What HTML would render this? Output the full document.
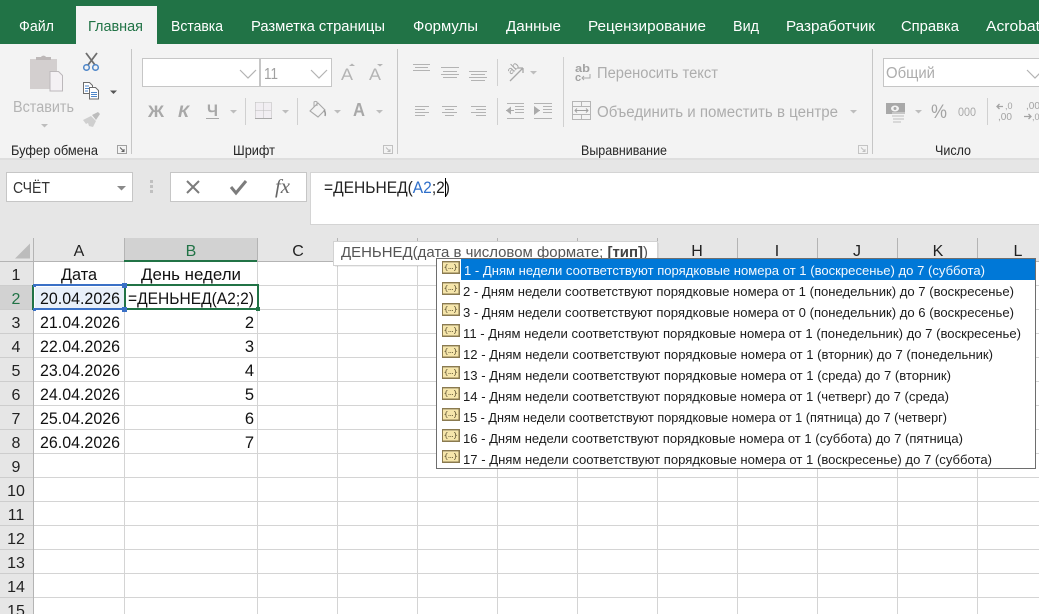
<!DOCTYPE html>
<html lang="ru"><head><meta charset="utf-8"><title>Excel</title>
<style>
html,body{margin:0;padding:0;background:#fff;width:1039px;height:614px;overflow:hidden}
svg{display:block}
text{font-family:"Liberation Sans",sans-serif}
.tab{font-size:15px;fill:#fff}
.dis{font-size:15.500px;fill:#adadad}
.lbl{font-size:14px;fill:#262626}
.hd{font-size:16px;fill:#222;text-anchor:middle}
.rn{font-size:16px;fill:#222;text-anchor:middle}
.c{font-size:16.500px;fill:#111}
.li{font-size:13px;fill:#1c1c1c}
.ic{fill:none;stroke:#b3b3b3;stroke-width:1}
.dd{fill:#b5b5b5}
</style></head><body>
<svg xmlns="http://www.w3.org/2000/svg" width="1039" height="614" viewBox="0 0 1039 614">
<defs>
<g id="li">
<rect x="0" y="0" width="18" height="13" fill="#8a7a50"/>
<rect x="1" y="1" width="15.500" height="10.500" fill="#f6e6ab"/>
<rect x="1" y="1" width="15.500" height="1" fill="#c9bb8c"/>
<path d="M5.500 3.500 Q4 3.500 4 5 V5.800 L3 6.300 L4 6.800 V7.500 Q4 9.500 5.500 9.500 M12 3.500 Q13.500 3.500 13.500 5 V5.800 L14.500 6.300 L13.500 6.800 V7.500 Q13.500 9.500 12 9.500" fill="none" stroke="#6b5f3c" stroke-width=".8"/>
<path d="M6.500 7.500h.9M8.300 7.500h.9M10 7.500h.9" stroke="#6b5f3c" stroke-width="1"/>
</g>
<path id="dn" d="M0 0h7l-3.500 3.500z" fill="#bdbdbd"/>
</defs>

<!-- title/tab band -->
<rect width="1039" height="44" fill="#217346"/>
<rect x="76" y="6" width="81" height="38" fill="#f3f3f3"/>
<text class="tab" x="19" y="31" textLength="35" lengthAdjust="spacingAndGlyphs">Файл</text>
<text class="tab" x="88" y="31" textLength="55" lengthAdjust="spacingAndGlyphs" style="fill:#217346">Главная</text>
<text class="tab" x="171" y="31" textLength="52" lengthAdjust="spacingAndGlyphs">Вставка</text>
<text class="tab" x="251" y="31" textLength="134" lengthAdjust="spacingAndGlyphs">Разметка страницы</text>
<text class="tab" x="413" y="31" textLength="65" lengthAdjust="spacingAndGlyphs">Формулы</text>
<text class="tab" x="506" y="31" textLength="55" lengthAdjust="spacingAndGlyphs">Данные</text>
<text class="tab" x="588" y="31" textLength="118" lengthAdjust="spacingAndGlyphs">Рецензирование</text>
<text class="tab" x="733" y="31" textLength="26" lengthAdjust="spacingAndGlyphs">Вид</text>
<text class="tab" x="786" y="31" textLength="89" lengthAdjust="spacingAndGlyphs">Разработчик</text>
<text class="tab" x="901" y="31" textLength="58" lengthAdjust="spacingAndGlyphs">Справка</text>
<text class="tab" x="986" y="31" textLength="54" lengthAdjust="spacingAndGlyphs">Acrobat</text>

<!-- ribbon -->
<rect y="44" width="1039" height="115" fill="#f3f3f3"/>
<rect y="159" width="1039" height="79" fill="#e6e6e6"/>
<rect y="158" width="1039" height="2" fill="#dedede"/>
<g fill="#c6c6c6">
<rect x="131" y="49" width="1" height="105"/><rect x="397" y="49" width="1" height="105"/>
<rect x="872" y="49" width="1" height="105"/>
</g>
<g fill="#d0d0d0">
<rect x="245" y="98" width="1" height="27"/><rect x="297" y="98" width="1" height="27"/>
<rect x="497" y="59" width="1" height="27"/><rect x="497" y="98" width="1" height="27"/>
<rect x="563" y="57" width="1" height="70"/><rect x="987" y="98" width="1" height="27"/>
</g>

<!-- clipboard group -->
<rect x="30" y="59" width="27" height="30" fill="#d3cfcf"/>
<path d="M36 60v-3h5a3 3 0 0 1 5 0h5v3z" fill="#bdb8b8"/>
<path d="M50 71.500h8.500l4 4v15.500h-12.500z" fill="#f4f1f4" stroke="#bcb8bb"/>
<text x="13" y="112" class="dis" textLength="61" lengthAdjust="spacingAndGlyphs" style="fill:#b4b4b4">Вставить</text>
<use href="#dn" x="41" y="124"/>
<path d="M86 53l9 12M97 53l-9 12" stroke="#6e6e6e" stroke-width="1.800" fill="none"/>
<circle cx="86.500" cy="67.500" r="2.800" fill="none" stroke="#4e86c8" stroke-width="1.500"/>
<circle cx="95.500" cy="67.500" r="2.800" fill="none" stroke="#4e86c8" stroke-width="1.500"/>
<path d="M83.500 82.500h6l3 3v8h-9z" fill="#fff" stroke="#6d6d6d"/>
<path d="M89.500 87.500h6l3 3v8.500h-9z" fill="#fff" stroke="#6d6d6d"/>
<path d="M85 86h4M85 88.500h4M85 91h3" stroke="#4e86c8"/>
<path d="M91 92.500h6M91 94.500h6M91 96.500h6" stroke="#4e86c8"/>
<path d="M110 90.500h7l-3.500 3.500z" fill="#555"/>
<path d="M83 120l8-4 5 5-3 6-4-1-1-3-2 1z" fill="#cfcfcf"/>
<path d="M92 115l6-3 2 2-4 6z" fill="#bdbdbd"/>
<text x="11" y="155" class="lbl" textLength="87" lengthAdjust="spacingAndGlyphs">Буфер обмена</text>
<path d="M117.500 145.500h9v8h-9z" fill="none" stroke="#a0a0a0"/>
<path d="M120 147.500l4 4M124 149v2.500h-2.500" fill="none" stroke="#606060"/>

<!-- font group -->
<rect x="142.500" y="58.500" width="117" height="28" fill="#fff" stroke="#c6c6c6"/>
<rect x="260.500" y="58.500" width="71" height="28" fill="#fff" stroke="#c6c6c6"/>
<path d="M240 70l8 8 8-8M311 70l8 8 8-8" fill="none" stroke="#b3b3b3" stroke-width="1.200"/>
<text x="264" y="79" style="font-size:15.500px;fill:#a0a0a0" textLength="14" lengthAdjust="spacingAndGlyphs">11</text>
<text x="341" y="80" style="font-size:17px;fill:#b4b4b4" textLength="12" lengthAdjust="spacingAndGlyphs">A</text>
<path d="M349 66h6l-3-2.500z" fill="#b4b4b4"/>
<text x="369" y="80" style="font-size:17px;fill:#b4b4b4" textLength="12" lengthAdjust="spacingAndGlyphs">A</text>
<path d="M377 64h6l-3 2.500z" fill="#b4b4b4"/>
<text x="148" y="117" style="font-size:17px;font-weight:bold;fill:#a8a8a8" textLength="16" lengthAdjust="spacingAndGlyphs">Ж</text>
<text x="178" y="117" style="font-size:17px;font-weight:bold;font-style:italic;fill:#a8a8a8" textLength="11" lengthAdjust="spacingAndGlyphs">К</text>
<text x="207" y="116" style="font-size:17px;font-weight:bold;fill:#a8a8a8" textLength="11" lengthAdjust="spacingAndGlyphs">Ч</text>
<rect x="206" y="118" width="13" height="1" fill="#a8a8a8"/>
<use href="#dn" x="230" y="110"/><use href="#dn" x="282" y="110"/><use href="#dn" x="334" y="110"/><use href="#dn" x="376" y="110"/>
<rect x="255" y="103" width="17" height="15" fill="#f0ebf2" opacity=".6"/>
<path d="M255.500 102.500h16M255.500 110.500h16M255.500 102.500v15M263.500 102.500v15M271.500 102.500v15" stroke="#bbb" stroke-dasharray="1 1" fill="none"/>
<rect x="255" y="118" width="17" height="1" fill="#a8a8a8"/>
<path d="M310 111l8-8 7 7-7 7z" fill="none" stroke="#a8a8a8" stroke-width="1.100"/>
<path d="M314 107v-5a2 2 0 0 1 3 0v4" fill="none" stroke="#a8a8a8"/>
<path d="M324 110q2 3 1 6" fill="none" stroke="#999" stroke-width="1.500"/>
<text x="353" y="116" style="font-size:18px;font-weight:bold;fill:#a8a8a8" textLength="12" lengthAdjust="spacingAndGlyphs">A</text>
<text x="233" y="155" class="lbl" textLength="42" lengthAdjust="spacingAndGlyphs">Шрифт</text>
<path d="M383.500 145.500h9v8h-9z" fill="none" stroke="#c0c0c0"/>
<path d="M386 147.500l4 4M390 149v2.500h-2.500" fill="none" stroke="#bbb"/>

<!-- alignment group -->
<g class="ic">
<path d="M413 64.500h17M415 67.500h13M413 70.500h17"/>
<path d="M441 67.500h18M443 71.500h14M441 74.500h18M443 77.500h14"/>
<path d="M469 71.500h18M471 74.500h14M469 77.500h18M471 80.500h14"/>
<path d="M415 106.500h14M415 109.500h10M415 112.500h14M415 115.500h10"/>
<path d="M442 106.500h15M445 109.500h9M442 112.500h15M445 115.500h9"/>
<path d="M471 106.500h15M476 109.500h10M471 112.500h15M476 115.500h10"/>
<path d="M515 106.500h9M515 109.500h9M515 112.500h9M507 103.500h17M507 118.500h17"/>
<path d="M534 103.500h18M543 106.500h9M543 109.500h9M543 112.500h9M534 118.500h18"/>
</g>
<path d="M506 110.500l5-4v8z M534 106l6 4.500-6 4.500z" fill="#aaa"/>
<path d="M506 110.500h8M534 110.500h6" stroke="#aaa"/>
<text transform="translate(511,75) rotate(-45)" style="font-size:11px;fill:#a3a3a3">ab</text>
<path d="M510 81l13-13M523 68v5M523 68h-5" fill="none" stroke="#a8a8a8" stroke-width="1.300"/>
<use href="#dn" x="530" y="71"/>
<text x="575" y="72" style="font-size:11px;font-weight:bold;fill:#a3a3a3" textLength="15" lengthAdjust="spacingAndGlyphs">ab</text>
<text x="575" y="81" style="font-size:11px;font-weight:bold;fill:#a3a3a3">c</text>
<path d="M590 74v4h-8M584 76l-2 2 2 2" fill="none" stroke="#a8a8a8"/>
<text x="597" y="78" class="dis" textLength="121" lengthAdjust="spacingAndGlyphs">Переносить текст</text>
<rect x="572.500" y="101.500" width="18" height="18" fill="none" stroke="#b5b5b5"/>
<path d="M572.500 106.500h18M572.500 114.500h18M581.500 101.500v5M581.500 114.500v5" stroke="#b5b5b5"/>
<path d="M575 110.500h13M577 108.500l-2 2 2 2M586 108.500l2 2-2 2" fill="none" stroke="#a0a0a0"/>
<text x="597" y="117" class="dis" textLength="241" lengthAdjust="spacingAndGlyphs">Объединить и поместить в центре</text>
<use href="#dn" x="850" y="110"/>
<text x="581" y="155" class="lbl" textLength="86" lengthAdjust="spacingAndGlyphs">Выравнивание</text>
<path d="M858.500 145.500h9v8h-9z" fill="none" stroke="#c4c4c4"/>
<path d="M861 147.500l4 4M865 149v2.500h-2.500" fill="none" stroke="#c0c0c0"/>

<!-- number group -->
<rect x="883.500" y="58.500" width="160" height="28" fill="#fff" stroke="#c6c6c6"/>
<text x="886" y="78" class="dis" textLength="49" lengthAdjust="spacingAndGlyphs">Общий</text>
<path d="M1027 70l8 8 8-8" fill="none" stroke="#b3b3b3" stroke-width="1.200"/>
<rect x="886" y="103" width="19" height="11" fill="#a8a8a8"/>
<ellipse cx="895" cy="108.500" rx="4" ry="3" fill="#f3f3f3"/>
<circle cx="895" cy="108.500" r="1.500" fill="#a8a8a8"/>
<path d="M892 113h13M892 116h12M893 119h11M893 122h8" stroke="#d0d0d0" stroke-width="1.500"/>
<use href="#dn" x="915" y="110"/>
<text x="931" y="118" style="font-size:19px;fill:#a3a3a3" textLength="16" lengthAdjust="spacingAndGlyphs">%</text>
<text x="958" y="116" style="font-size:11.500px;fill:#a9a9a9" textLength="18" lengthAdjust="spacingAndGlyphs">000</text>
<text x="1005" y="109" style="font-size:9px;fill:#a3a3a3">,0</text>
<text x="998" y="120" style="font-size:10px;fill:#a3a3a3" textLength="14" lengthAdjust="spacingAndGlyphs">,00</text>
<path d="M1003 106.500h-6M999.500 104l-2.500 2.500 2.500 2.500" fill="none" stroke="#a3a3a3" stroke-width="1.300"/>
<text x="1026" y="109" style="font-size:10px;fill:#a3a3a3" textLength="14" lengthAdjust="spacingAndGlyphs">,00</text>
<text x="1032" y="120" style="font-size:9px;fill:#a3a3a3">,0</text>
<path d="M1024 116.500h7M1028.500 114l2.500 2.500-2.500 2.500" fill="none" stroke="#a3a3a3" stroke-width="1.300"/>
<text x="935" y="155" class="lbl" textLength="36" lengthAdjust="spacingAndGlyphs">Число</text>

<!-- formula bar -->
<rect x="6.500" y="172.500" width="126" height="29" fill="#fff" stroke="#c6c6c6"/>
<text x="13" y="193" style="font-size:15.500px;fill:#333" textLength="37" lengthAdjust="spacingAndGlyphs">СЧЁТ</text>
<path d="M117 186h9l-4.500 4.500z" fill="#8a8a8a"/>
<g fill="#c0c0c0"><rect x="150" y="180" width="3" height="3"/><rect x="150" y="185" width="3" height="3"/><rect x="150" y="190" width="3" height="3"/></g>
<rect x="170.500" y="172.500" width="136" height="29" fill="#fff" stroke="#c6c6c6"/>
<path d="M187 181l12 12M199 181l-12 12" stroke="#7c7c7c" stroke-width="2" fill="none"/>
<path d="M231 187l5 6 10-12" stroke="#7c7c7c" stroke-width="3" fill="none"/>
<text x="275" y="193" style="font-family:'Liberation Serif',serif;font-size:20px;font-style:italic;fill:#666" textLength="15" lengthAdjust="spacingAndGlyphs">fx</text>
<rect x="310.500" y="172.500" width="735" height="52" fill="#fff" stroke="#d4d4d4"/>
<text x="324" y="193" style="font-size:16.500px;fill:#222" textLength="126" lengthAdjust="spacingAndGlyphs"><tspan>=ДЕНЬНЕД(</tspan><tspan fill="#2f6fc9">А2</tspan><tspan>;2)</tspan></text>
<rect x="445" y="178" width="1" height="19" fill="#000"/>

<!-- grid -->
<rect y="238" width="1039" height="376" fill="#fff"/>
<rect y="238" width="1039" height="24" fill="#e6e6e6"/>
<rect x="0" y="262" width="33" height="352" fill="#e6e6e6"/>
<rect x="124" y="238" width="133" height="22" fill="#d2d2d2"/>
<rect x="0" y="286" width="33" height="23" fill="#d2d2d2"/>
<path d="M30 243.500v15h-15z" fill="#bcbcbc"/>
<g stroke="#d4d4d4">
<path d="M124.500 262V614M257.500 262V614M337.500 262V614M417.500 262V614M497.500 262V614M577.500 262V614M657.500 262V614M737.500 262V614M817.500 262V614M897.500 262V614M977.500 262V614"/>
<path d="M33 285.500H1039M33 309.500H1039M33 333.500H1039M33 357.500H1039M33 381.500H1039M33 405.500H1039M33 429.500H1039M33 453.500H1039M33 477.500H1039M33 501.500H1039M33 525.500H1039M33 549.500H1039M33 573.500H1039M33 597.500H1039"/>
</g>
<g stroke="#b4b4b4">
<path d="M33.500 238V614M124.500 238V261M257.500 238V261M337.500 238V261M417.500 238V261M497.500 238V261M577.500 238V261M657.500 238V261M737.500 238V261M817.500 238V261M897.500 238V261M977.500 238V261"/>
<path d="M0 261.500H1039"/>
</g>
<g stroke="#cdcdcd">
<path d="M0 285.500H33M0 309.500H33M0 333.500H33M0 357.500H33M0 381.500H33M0 405.500H33M0 429.500H33M0 453.500H33M0 477.500H33M0 501.500H33M0 525.500H33M0 549.500H33M0 573.500H33M0 597.500H33"/>
</g>
<rect x="124" y="260" width="133" height="2" fill="#217346"/>
<text class="hd" x="79" y="256">A</text>
<text class="hd" x="191" y="256" style="fill:#217346">B</text>
<text class="hd" x="298" y="256">C</text>
<text class="hd" x="697" y="256">H</text><text class="hd" x="777" y="256">I</text><text class="hd" x="857" y="256">J</text><text class="hd" x="938" y="256">K</text><text class="hd" x="1018" y="256">L</text>
<text class="rn" x="16" y="280">1</text>
<text class="rn" x="16" y="304" style="fill:#217346">2</text>
<text class="rn" x="16" y="328">3</text><text class="rn" x="16" y="352">4</text><text class="rn" x="16" y="376">5</text><text class="rn" x="16" y="400">6</text><text class="rn" x="16" y="424">7</text><text class="rn" x="16" y="448">8</text><text class="rn" x="16" y="472">9</text>
<text class="rn" x="16" y="496">10</text><text class="rn" x="16" y="520">11</text><text class="rn" x="16" y="544">12</text><text class="rn" x="16" y="568">13</text><text class="rn" x="16" y="592">14</text><text class="rn" x="16" y="616">15</text>

<rect x="35" y="287" width="89" height="21" fill="#e9f0fa"/>
<text class="c" x="61" y="280" textLength="36" lengthAdjust="spacingAndGlyphs">Дата</text>
<text class="c" x="141" y="280" textLength="100" lengthAdjust="spacingAndGlyphs">День недели</text>
<text class="c" x="40" y="304" textLength="80" lengthAdjust="spacingAndGlyphs">20.04.2026</text>
<text class="c" x="40" y="328" textLength="80" lengthAdjust="spacingAndGlyphs">21.04.2026</text>
<text class="c" x="40" y="352" textLength="80" lengthAdjust="spacingAndGlyphs">22.04.2026</text>
<text class="c" x="40" y="376" textLength="80" lengthAdjust="spacingAndGlyphs">23.04.2026</text>
<text class="c" x="40" y="400" textLength="80" lengthAdjust="spacingAndGlyphs">24.04.2026</text>
<text class="c" x="40" y="424" textLength="80" lengthAdjust="spacingAndGlyphs">25.04.2026</text>
<text class="c" x="40" y="448" textLength="80" lengthAdjust="spacingAndGlyphs">26.04.2026</text>
<text class="c" x="254" y="328" text-anchor="end">2</text><text class="c" x="254" y="352" text-anchor="end">3</text><text class="c" x="254" y="376" text-anchor="end">4</text><text class="c" x="254" y="400" text-anchor="end">5</text><text class="c" x="254" y="424" text-anchor="end">6</text><text class="c" x="254" y="448" text-anchor="end">7</text>

<!-- selection -->
<rect x="35" y="284" width="89" height="2" fill="#3a70c6"/>
<rect x="35" y="308" width="89" height="2" fill="#3a70c6"/>
<rect x="32" y="285" width="2" height="25" fill="#217346"/>
<rect x="33" y="284" width="3" height="3" fill="#3a70c6"/><rect x="33" y="308" width="3" height="3" fill="#3a70c6"/>
<rect x="127" y="284.500" width="131" height="25" fill="#fff"/>
<rect x="127" y="284" width="131" height="2" fill="#217346"/>
<rect x="127" y="308" width="131" height="2" fill="#217346"/>
<rect x="257" y="284" width="2" height="26" fill="#217346"/>
<rect x="124" y="286" width="2" height="22" fill="#217346"/>
<rect x="122" y="283" width="5" height="5" fill="#3a70c6"/>
<rect x="122" y="307" width="5" height="5" fill="#3a70c6"/>
<rect x="256" y="307" width="4" height="4" fill="#217346"/>
<text class="c" x="128" y="304" textLength="126" lengthAdjust="spacingAndGlyphs">=ДЕНЬНЕД(А2;2)</text>

<!-- tooltip -->
<rect x="335" y="243" width="324" height="24" fill="#000" opacity=".06"/>
<rect x="333.500" y="241.500" width="324" height="24" fill="#fff" stroke="#d2d2d2"/>
<text x="341" y="257" style="font-size:14.500px;fill:#555" textLength="307" lengthAdjust="spacingAndGlyphs">ДЕНЬНЕД(дата в числовом формате; <tspan font-weight="bold" fill="#444">[тип]</tspan>)</text>

<!-- list -->
<rect x="436.500" y="258.500" width="599" height="210" fill="#fff" stroke="#6e6e6e"/>
<rect x="461" y="259" width="574" height="21" fill="#0078d7"/>
<use href="#li" x="442" y="261"/><use href="#li" x="442" y="282"/><use href="#li" x="442" y="303"/><use href="#li" x="442" y="324"/><use href="#li" x="442" y="345"/><use href="#li" x="442" y="366"/><use href="#li" x="442" y="387"/><use href="#li" x="442" y="408"/><use href="#li" x="442" y="429"/><use href="#li" x="442" y="450"/>
<text class="li" x="464" y="275" textLength="521" lengthAdjust="spacingAndGlyphs" style="fill:#f4f9fe">1 - Дням недели соответствуют порядковые номера от 1 (воскресенье) до 7 (суббота)</text>
<text class="li" x="463" y="296" textLength="551" lengthAdjust="spacingAndGlyphs">2 - Дням недели соответствуют порядковые номера от 1 (понедельник) до 7 (воскресенье)</text>
<text class="li" x="463" y="317" textLength="551" lengthAdjust="spacingAndGlyphs">3 - Дням недели соответствуют порядковые номера от 0 (понедельник) до 6 (воскресенье)</text>
<text class="li" x="463" y="338" textLength="558" lengthAdjust="spacingAndGlyphs">11 - Дням недели соответствуют порядковые номера от 1 (понедельник) до 7 (воскресенье)</text>
<text class="li" x="463" y="359" textLength="530" lengthAdjust="spacingAndGlyphs">12 - Дням недели соответствуют порядковые номера от 1 (вторник) до 7 (понедельник)</text>
<text class="li" x="463" y="380" textLength="488" lengthAdjust="spacingAndGlyphs">13 - Дням недели соответствуют порядковые номера от 1 (среда) до 7 (вторник)</text>
<text class="li" x="463" y="401" textLength="486" lengthAdjust="spacingAndGlyphs">14 - Дням недели соответствуют порядковые номера от 1 (четверг) до 7 (среда)</text>
<text class="li" x="463" y="422" textLength="484" lengthAdjust="spacingAndGlyphs">15 - Дням недели соответствуют порядковые номера от 1 (пятница) до 7 (четверг)</text>
<text class="li" x="463" y="443" textLength="500" lengthAdjust="spacingAndGlyphs">16 - Дням недели соответствуют порядковые номера от 1 (суббота) до 7 (пятница)</text>
<text class="li" x="463" y="464" textLength="529" lengthAdjust="spacingAndGlyphs">17 - Дням недели соответствуют порядковые номера от 1 (воскресенье) до 7 (суббота)</text>
</svg>
</body></html>
